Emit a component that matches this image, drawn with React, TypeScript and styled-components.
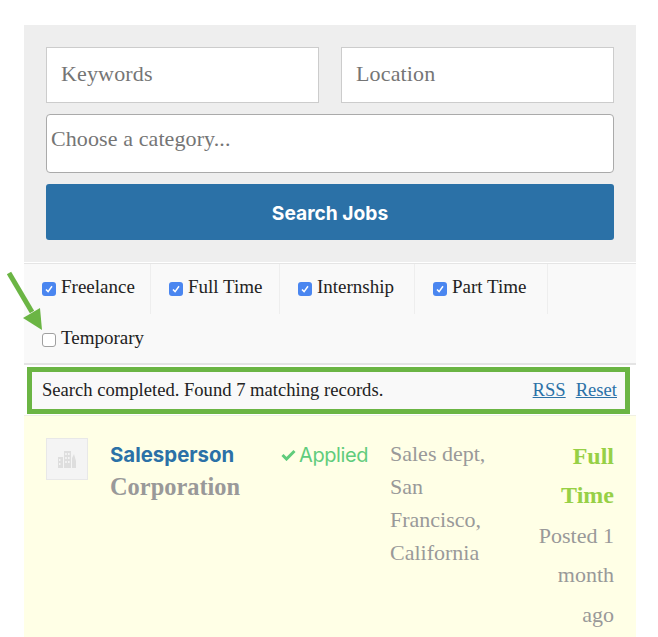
import React from "react";
import styled, { createGlobalStyle } from "styled-components";

const Global = createGlobalStyle`
  html, body { margin: 0; padding: 0; height: 637px; overflow: hidden; background: #fff; }
  body { font-family: "Liberation Serif", "Times New Roman", serif; color: #222; }
  * { box-sizing: border-box; }
`;

const Page = styled.div`
  position: relative;
  width: 658px;
  height: 637px;
  padding: 25px 22px 0 24px;
  overflow: hidden;
`;

const SearchPanel = styled.form`
  background: #eeeeee;
  padding: 22px 22px 22px;
  height: 237px;
  display: flex;
  flex-direction: column;
`;

const FieldRow = styled.div`
  display: grid;
  grid-template-columns: 273px 273px;
  column-gap: 22px;
  margin-bottom: 11px;
`;

const TextField = styled.div`
  height: 56px;
  background: #fff;
  border: 1px solid #cccccc;
  padding: 0 14px 3px;
  display: flex;
  align-items: center;
  font-size: 22px;
  letter-spacing: 0.15px;
  color: #757575;
`;

const CategorySelect = styled.div`
  height: 59px;
  background: #fff;
  border: 1px solid #aaaaaa;
  border-radius: 4px;
  padding: 10px 4px 0;
  font-size: 22px;
  line-height: 28px;
  letter-spacing: 0.1px;
  color: #757575;
  margin-bottom: 11px;
`;

const SearchButton = styled.button`
  height: 56px;
  width: 100%;
  border: none;
  border-radius: 3px;
  background: #2b71a7;
  color: #fff;
  font-family: Inter, "Liberation Sans", sans-serif;
  font-size: 19.2px;
  font-weight: 700;
  padding: 1px 0 0;
`;

const FilterPanel = styled.ul`
  list-style: none;
  margin: 1px 0 0;
  padding: 0;
  height: 102px;
  background: #f9f9f9;
  border-top: 1px solid #e5e5e5;
  border-bottom: 2px solid #e4e4e4;
  display: flex;
  flex-wrap: wrap;
  align-content: flex-start;
`;

const FilterItem = styled.li<{ $w: number; $plain?: boolean }>`
  width: ${(p) => p.$w}px;
  height: 50px;
  margin-bottom: 1px;
  padding: 15px 0 0 18px;
  border-right: ${(p) => (p.$plain ? "none" : "1px solid #eeeeee")};
  display: flex;
  align-items: flex-start;
  font-size: 19px;
  line-height: 16px;
  color: #222;
  white-space: nowrap;
`;

const Check = styled.span<{ $on?: boolean }>`
  flex: none;
  width: 14px;
  height: 14px;
  margin: 3px 5px 0 0;
  border-radius: 3px;
  background: ${(p) => (p.$on ? "#4a86f0" : "#fff")};
  border: ${(p) => (p.$on ? "none" : "1px solid #a0a0a0")};
  display: flex;
  align-items: center;
  justify-content: center;
`;

const StatusBar = styled.div`
  margin: 2px 6px 0 3px;
  height: 47px;
  border: 5px solid #6bb544;
  background: #f9f9f9;
  display: flex;
  align-items: center;
  justify-content: space-between;
  padding: 0 8px 1px 10px;
  font-size: 18.6px;
  color: #222;
`;

const StatusLinks = styled.div`
  display: flex;
  gap: 10px;
`;

const StatusLink = styled.a`
  color: #2b71a7;
  text-decoration: underline;
`;

const JobRow = styled.div`
  position: relative;
  margin-top: 1px;
  height: 222px;
  border-top: 1px solid #f0f0e4;
  background: #ffffe6;
  padding: 22px 22px 0;
  display: grid;
  grid-template-columns: 64px 171px 109px 1fr;
  align-items: start;
`;

const Logo = styled.div`
  width: 42px;
  height: 42px;
  background: #f4f4f4;
  border: 1px solid #e8e8e8;
  display: flex;
  align-items: center;
  justify-content: center;
`;

const TitleCol = styled.div`
  padding-top: 3px;
`;

const JobTitle = styled.div`
  font-family: Inter, "Liberation Sans", sans-serif;
  font-size: 20.4px;
  font-weight: 700;
  line-height: 28px;
  color: #2b71a7;
`;

const Company = styled.div`
  font-size: 24.4px;
  font-weight: 700;
  line-height: 35px;
  color: #999999;
`;

const Applied = styled.div`
  font-family: Inter, "Liberation Sans", sans-serif;
  font-size: 20px;
  line-height: 28px;
  padding-top: 3px;
  letter-spacing: -0.4px;
  color: #5fcc7c;
  display: flex;
  align-items: center;
  gap: 3px;
`;

const Location = styled.div`
  font-size: 22px;
  line-height: 33px;
  color: #999999;
  width: 100px;
  margin-top: -1px;
`;

const Meta = styled.div`
  position: absolute;
  right: 22px;
  top: 21px;
  text-align: right;
  font-size: 22px;
  line-height: 39.4px;
  color: #999999;
`;

const JobType = styled.div`
  font-weight: 700;
  font-size: 24px;
  color: #97d046;
`;

const ArrowOverlay = styled.svg`
  position: absolute;
  left: 0;
  top: 265px;
`;

const Tick = () => (
  <svg width="10" height="10" viewBox="0 0 10 10" fill="none" stroke="#fff" strokeWidth="1.5">
    <path d="M2 5.4 4.1 7.6 8 2.2" />
  </svg>
);

const filters = [
  { label: "Freelance", w: 127, on: true },
  { label: "Full Time", w: 129, on: true },
  { label: "Internship", w: 135, on: true },
  { label: "Part Time", w: 133, on: true },
  { label: "Temporary", w: 200, on: false, plain: true },
];

export default function App() {
  return (
    <Page>
      <Global />
      <SearchPanel>
        <FieldRow>
          <TextField>Keywords</TextField>
          <TextField>Location</TextField>
        </FieldRow>
        <CategorySelect>Choose a category...</CategorySelect>
        <SearchButton type="button">Search Jobs</SearchButton>
      </SearchPanel>
      <FilterPanel>
        {filters.map((f) => (
          <FilterItem key={f.label} $w={f.w} $plain={f.plain}>
            <Check $on={f.on}>{f.on && <Tick />}</Check>
            {f.label}
          </FilterItem>
        ))}
      </FilterPanel>
      <StatusBar>
        <span>Search completed. Found 7 matching records.</span>
        <StatusLinks>
          <StatusLink>RSS</StatusLink>
          <StatusLink>Reset</StatusLink>
        </StatusLinks>
      </StatusBar>
      <JobRow>
        <Logo>
          <svg width="20" height="18" viewBox="0 0 20 18">
            <path
              fill="#dedede"
              fillRule="evenodd"
              d="M1 7h5v11H1zM2 9v2h1.4V9zM2 13v2h1.4v-2zM7 1h7v17H7zM8.2 3v2h1.6V3zM11 3v2h1.6V3zM8.2 7v2h1.6V7zM11 7v2h1.6V7zM8.2 11v2h1.6v-2zM11 11v2h1.6v-2zM15 8l2-4 2 7v7h-4z"
            />
          </svg>
        </Logo>
        <TitleCol>
          <JobTitle>Salesperson</JobTitle>
          <Company>Corporation</Company>
        </TitleCol>
        <Applied>
          <svg width="15" height="12" viewBox="0 0 15 12" fill="none" stroke="#5fcc7c" strokeWidth="3">
            <path d="M1.5 6 5.5 10 13.5 2" />
          </svg>
          Applied
        </Applied>
        <Location>Sales dept, San Francisco, California</Location>
        <Meta>
          <JobType>Full<br />Time</JobType>
          Posted 1<br />month<br />ago
        </Meta>
      </JobRow>
      <ArrowOverlay width="50" height="70" viewBox="0 0 50 70">
        <path d="M9 8 32 47" stroke="#6bb544" strokeWidth="5" fill="none" />
        <path d="M23 53 40 43 42 65z" fill="#6bb544" />
      </ArrowOverlay>
    </Page>
  );
}
